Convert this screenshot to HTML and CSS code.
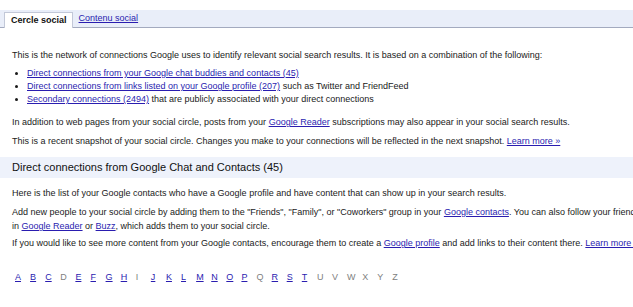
FILE: index.html
```html
<!DOCTYPE html>
<html>
<head>
<meta charset="utf-8">
<link rel="stylesheet" href="styles.css">
</head>
<body>
<div class="page">
  <div class="tabbar">
    <div class="tab active">Cercle social</div>
    <a class="tab link" href="#">Contenu social</a>
  </div>

  <p class="intro">This is the network of connections Google uses to identify relevant social search results. It is based on a combination of the following:</p>
  <ul class="list">
    <li><a href="#">Direct connections from your Google chat buddies and contacts (45)</a></li>
    <li><a href="#">Direct connections from links listed on your Google profile (207)</a> such as Twitter and FriendFeed</li>
    <li><a href="#">Secondary connections (2494)</a> that are publicly associated with your direct connections</li>
  </ul>
  <p class="p1">In addition to web pages from your social circle, posts from your <a href="#">Google Reader</a> subscriptions may also appear in your social search results.</p>
  <p class="p2">This is a recent snapshot of your social circle. Changes you make to your connections will be reflected in the next snapshot. <a href="#">Learn more »</a></p>

  <h2 class="section">Direct connections from Google Chat and Contacts (45)</h2>

  <p class="p3">Here is the list of your Google contacts who have a Google profile and have content that can show up in your search results.</p>
  <p class="p4">Add new people to your social circle by adding them to the "Friends", "Family", or "Coworkers" group in your <a href="#">Google contacts</a>. You can also follow your friends in <a href="#">Google Reader</a> or <a href="#">Buzz</a>, which adds them to your social circle.</p>
  <p class="p5">If you would like to see more content from your Google contacts, encourage them to create a <a href="#">Google profile</a> and add links to their content there. <a href="#">Learn more »</a></p>

  <div class="alpha">
    <a href="#">A</a><a href="#">B</a><a href="#">C</a><span>D</span><a href="#">E</a><a href="#">F</a><a href="#">G</a><a href="#">H</a><span>I</span><a href="#">J</a><a href="#">K</a><a href="#">L</a><a href="#">M</a><a href="#">N</a><a href="#">O</a><a href="#">P</a><span>Q</span><a href="#">R</a><a href="#">S</a><a href="#">T</a><span>U</span><span>V</span><span>W</span><span>X</span><span>Y</span><span>Z</span>
  </div>
</div>
</body>
</html>
```

FILE: styles.css
```css
html, body {
  margin: 0;
  padding: 0;
  overflow: hidden;
  background: #fff;
}
body {
  font-family: "Liberation Sans", Arial, sans-serif;
  font-size: 9px;
  color: #1a1a1a;
}
a {
  color: #2a1db0;
}
.page {
  width: 646px;
  padding-top: 10px;
}
.tabbar {
  display: flex;
  align-items: flex-end;
  height: 17px;
  background: #e9eef9;
  border-bottom: 1px solid #a3aabf;
  padding-left: 4px;
}
.tab {
  font-size: 9px;
  line-height: 14px;
}
.tab.active {
  padding: 0 5px 0 6px;
  background: #fff;
  font-weight: bold;
  border: 1px solid #c2c8d8;
  border-bottom: none;
  margin-bottom: -1px;
  height: 15px;
  line-height: 15px;
  color: #111;
}
.tab.link {
  padding: 0 0 2px 6px;
}
p {
  margin: 0;
  padding-left: 12px;
  line-height: 13px;
}
.intro {
  margin-top: 21px;
}
.list {
  margin: 5px 0 0 0;
  padding-left: 27px;
  line-height: 13px;
}
.list li {
  list-style: disc;
}
.p1 {
  margin-top: 10px;
}
.p2 {
  margin-top: 6px;
}
.section {
  margin: 9px 0 0 0;
  background: #eef2fb;
  font-weight: normal;
  font-size: 11px;
  line-height: 21px;
  padding-left: 12px;
  color: #111;
}
.p3 {
  margin-top: 9px;
}
.p4 {
  margin-top: 5px;
  line-height: 14px;
}
.p5 {
  margin-top: 4px;
}
.alpha {
  margin-top: 21px;
  padding-left: 15px;
  display: flex;
  line-height: 13px;
}
.alpha a, .alpha span {
  width: 15.1px;
  flex: none;
}
.alpha span {
  color: #808080;
}
```
